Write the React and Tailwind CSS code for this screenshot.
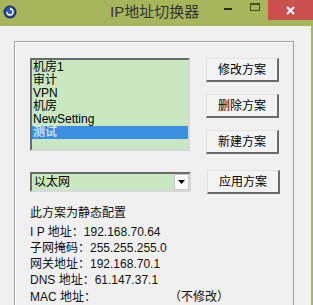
import React from "react";

const items = ["机房1", "审计", "VPN", "机房", "NewSetting", "测试"];
const selected = 5;

function Btn({ children }) {
  return (
    <button className="w-[73px] h-[24px] bg-[#f3f3f3] border border-t-[#e2e2e2] border-l-[#e2e2e2] border-r-2 border-b-2 border-r-[#6b6b6b] border-b-[#6b6b6b] text-[12px] text-black leading-none">
      {children}
    </button>
  );
}

export default function App() {
  return (
    <div
      className="w-[313px] h-[305px] overflow-hidden bg-[#f0f0f0] flex flex-col"
      style={{ fontFamily: '"Liberation Sans", "Noto Sans CJK SC", sans-serif' }}
    >
      {/* title bar */}
      <div className="h-[26px] shrink-0 bg-[#a8b65b] flex items-start relative">
        <svg className="ml-[3px] mt-[5px]" width="14" height="14" viewBox="0 0 14 14">
          <circle cx="7" cy="7" r="6.5" fill="#1d2f6b" />
          <circle cx="7" cy="7" r="5" fill="#2e55b8" />
          <path d="M4 7a3 3 0 1 0 3-3" stroke="#fff" strokeWidth="1.4" fill="none" />
          <path d="M7 2.3 L8.8 4 L7 5.6 Z" fill="#fff" />
        </svg>
        <div className="absolute left-[110px] top-[3px] text-[15px] leading-[18px] text-[#333]">
          IP地址切换器
        </div>
        <div className="absolute left-[224px] top-[8px] w-[8px] h-[2px] bg-[#2a2a2a]" />
        <div className="absolute left-[250px] top-[3px] w-[10px] h-[8px] border border-[#4a4a2a] border-t-2" />
        <div className="absolute right-0 top-0 w-[45px] h-[20px] bg-[#c9504f] flex items-center justify-center">
          <svg width="9" height="9" viewBox="0 0 9 9">
            <path d="M1 1 L8 8 M8 1 L1 8" stroke="#fff" strokeWidth="2" />
          </svg>
        </div>
      </div>

      {/* client */}
      <div className="flex-1 border-r-2 border-[#a8b65b] pt-[15px] pl-[14px]">
        <div className="w-[280px] h-[300px] border border-[#a0a0a0] shadow-[inset_1px_1px_0_#fff] pl-[15px] pt-[16px]">
          <div className="flex gap-x-[16px]">
            <div className="w-[160px] h-[93px] pt-[1px] bg-[#c9e7c1] border-2 border-t-[#6a6a6a] border-l-[#6a6a6a] border-r-[#d8d8d8] border-b-[#d8d8d8] text-[12px] leading-[13px] text-black">
              {items.map((item, i) => (
                <div
                  key={item}
                  className={
                    i === selected
                      ? "bg-[#3d8fe6] text-white pl-[1px]"
                      : "pl-[1px]"
                  }
                >
                  {item}
                </div>
              ))}
            </div>
            <div className="flex flex-col gap-[12px]">
              <Btn>修改方案</Btn>
              <Btn>删除方案</Btn>
              <Btn>新建方案</Btn>
            </div>
          </div>

          <div className="flex items-center gap-x-[16px] mt-[16px]">
            <div className="w-[161px] h-[20px] bg-[#c9e7c1] border-2 border-t-[#6a6a6a] border-l-[#6a6a6a] border-r-[#d8d8d8] border-b-[#d8d8d8] flex items-center">
              <span className="flex-1 pl-[2px] text-[12px] text-black">以太网</span>
              <div className="w-[15px] h-[16px] bg-[#fafafa] border border-[#c8c8c8] flex items-center justify-center">
                <svg width="7" height="4" viewBox="0 0 7 4">
                  <path d="M0 0 H7 L3.5 4 Z" fill="#000" />
                </svg>
              </div>
            </div>
            <Btn>应用方案</Btn>
          </div>

          <div className="mt-[11px] text-[12px] text-[#111]">
            <div className="leading-[16px]">此方案为静态配置</div>
            <div className="mt-[3px] leading-[16px]">
              <div>I P 地址：192.168.70.64</div>
              <div>子网掩码：255.255.255.0</div>
              <div>网关地址：192.168.70.1</div>
              <div>DNS 地址：61.147.37.1</div>
              <div className="flex mt-[1px]">
                <span className="w-[139px]">MAC 地址：</span>
                <span>（不修改）</span>
              </div>
            </div>
          </div>
        </div>
      </div>
    </div>
  );
}
